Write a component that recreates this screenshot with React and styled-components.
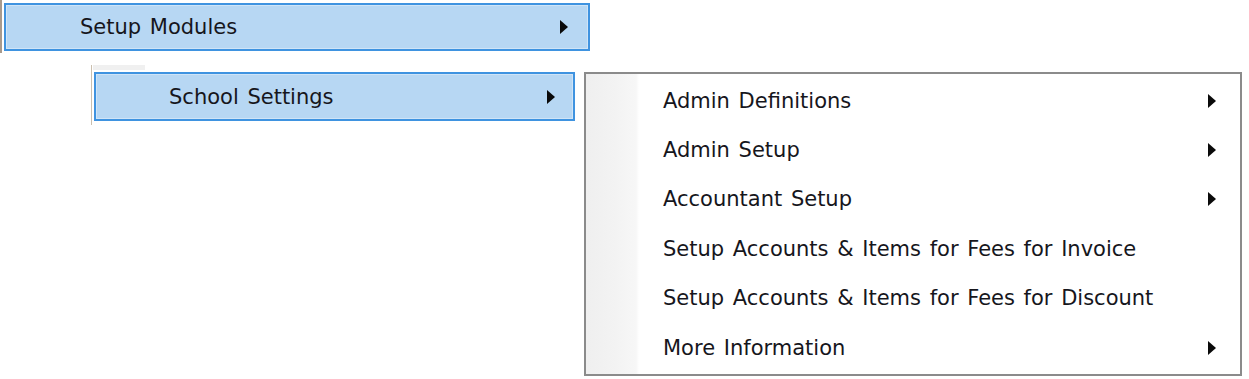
import React from "react";
import styled, { createGlobalStyle } from "styled-components";

const Global = createGlobalStyle`
  html, body { margin: 0; padding: 0; background: #ffffff; }
  body { font-family: "DejaVu Sans", "Liberation Sans", sans-serif; }
`;

const Page = styled.div`
  width: 1249px;
  height: 379px;
  overflow: hidden;
  background: #fff;
  display: flex;
  flex-direction: column;
`;

const ParentMenu = styled.div`
  width: 590px;
  height: 53px;
  border-left: 2px solid #a99a8c;
  box-sizing: border-box;
  padding: 3px 0 0 2px;
`;

const Highlight = styled.div`
  box-sizing: border-box;
  height: ${(p) => p.$h}px;
  width: ${(p) => p.$w}px;
  border: 2px solid #3f93e0;
  box-shadow: inset 0 0 0 1px #cfe4f7;
  background: #b7d7f3;
  display: flex;
  align-items: center;
  padding: 0 ${(p) => p.$pr}px 0 ${(p) => p.$pl}px;
`;

const Label = styled.span`
  flex: 1;
  font-size: 21px;
  word-spacing: 2px;
  color: #16161c;
  white-space: nowrap;
`;

const Arrow = styled.span`
  width: 0;
  height: 0;
  border-left: 8px solid #0a0a0a;
  border-top: 7px solid transparent;
  border-bottom: 7px solid transparent;
`;

const Lower = styled.div`
  display: flex;
  align-items: flex-start;
  margin-top: 12px;
  padding-left: 91px;
`;

const SubParent = styled.div`
  border-left: 1px solid #cbbfae;
  padding: 7px 0 4px 2px;
  background: linear-gradient(#f0f0f0, #f0f0f0) no-repeat 1px 0 / 52px 5px;
`;

const Panel = styled.div`
  margin: 7px 0 0 9px;
  box-sizing: border-box;
  width: 658px;
  height: 304px;
  border: 2px solid #8b8b8b;
  background: linear-gradient(
      to right,
      #efefef 0px,
      #f3f3f3 30px,
      #f7f7f7 50px,
      #ffffff 53px
    );
  padding-top: 2px;
  display: flex;
  flex-direction: column;
`;

const Item = styled.div`
  height: 49.4px;
  display: flex;
  align-items: center;
  padding: 0 24px 0 77px;
`;

const items = [
  { t: "Admin Definitions", sub: true },
  { t: "Admin Setup", sub: true },
  { t: "Accountant Setup", sub: true },
  { t: "Setup Accounts & Items for Fees for Invoice", sub: false },
  { t: "Setup Accounts & Items for Fees for Discount", sub: false },
  { t: "More Information", sub: true },
];

export default function App() {
  return (
    <Page>
      <Global />
      <ParentMenu>
        <Highlight $w={586} $h={48} $pl={74} $pr={20}>
          <Label>Setup Modules</Label>
          <Arrow />
        </Highlight>
      </ParentMenu>
      <Lower>
        <SubParent>
          <Highlight $w={481} $h={49} $pl={73} $pr={18}>
            <Label>School Settings</Label>
            <Arrow />
          </Highlight>
        </SubParent>
        <Panel>
          {items.map((it) => (
            <Item key={it.t}>
              <Label>{it.t}</Label>
              {it.sub && <Arrow />}
            </Item>
          ))}
        </Panel>
      </Lower>
    </Page>
  );
}
